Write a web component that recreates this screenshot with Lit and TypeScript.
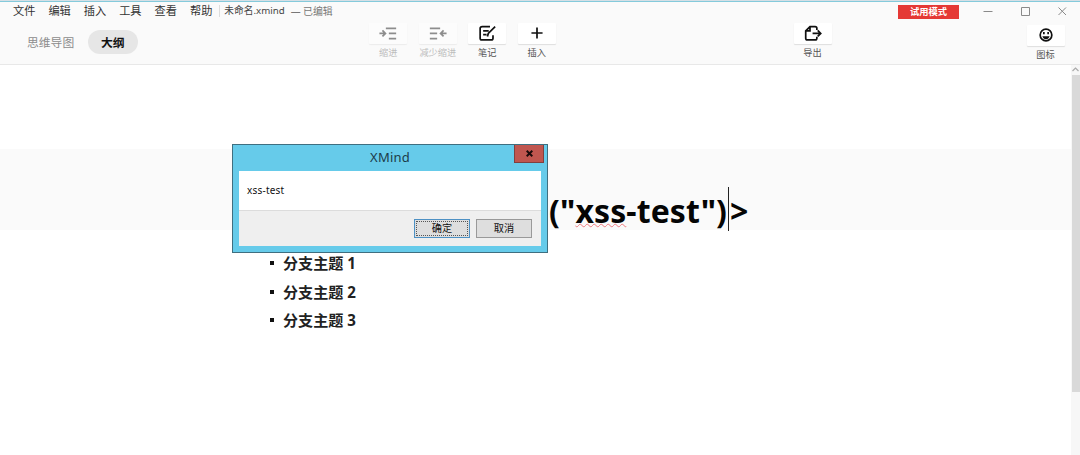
import { LitElement, html, css, svg, type TemplateResult } from "lit";
import { customElement, property } from "lit/decorators.js";

const icons: Record<string, TemplateResult> = {
  indent: svg`<path d="M0 11h7M3.500 7.500L7 11l-3.500 3.500M7.500 5h12M11 11h8.500M11 17h8.500" />`,
  outdent: svg`<path d="M.5 5h12M.5 11H9M.5 17H9M20 11h-7M16.500 7.500L13 11l3.500 3.500" />`,
  note: svg`<path d="M13.500 3H4.500Q2 3 2 5v11.500Q2 18.500 4 18.500h11q2 0 2-2V13M5.500 8h6.500M5.500 12.500h4M10.500 14.500l1-3.500L19.500 3" />`,
  plus: svg`<path d="M10 4v13M3.500 10.500h13" />`,
  exporting: svg`<path d="M14.500 7V5q0-2-2-2H6.500L1.500 8v8.500q0 2 2 2h9q2 0 2-2V15M6.500 3v5H1.500M9.500 11H19M15.500 7.500L19 11l-3.500 3.500" />`,
  smile: svg`<circle cx="10" cy="10.500" r="6.800" /><path d="M7.500 7v2.500M12.500 7v2.500" /><path class="fill" d="M5.800 12h8.400q-1 3.500-4.200 3.500T5.800 12z" />`,
};

@customElement("tool-button")
class ToolButton extends LitElement {
  @property() icon = "";
  @property() label = "";
  static styles = css`
    :host { display: flex; flex-direction: column; align-items: center; width: 50px; color: #111; }
    :host([off]) { color: #8d8d8d; }
    .box { width: 38px; height: 21px; display: flex; align-items: center; justify-content: center;
      background: #fff; border-radius: 1px; box-shadow: 0 1px 1px #dedede; }
    :host([off]) .box { background: #fcfcfc; box-shadow: 0 1px 1px #ececec; }
    svg { width: 18px; height: 18px; margin-top: -1px; fill: none; stroke: currentColor; stroke-width: 2; overflow: visible; }
    .fill { fill: currentColor; stroke: none; }
    .label { margin-top: 3px; font-size: 9.200px; line-height: 12px; white-space: nowrap; color: #555; }
    :host([off]) .label { color: #bdbdbd; }
  `;
  render() {
    return html`<div class="box"><svg viewBox="0 0 20 21">${icons[this.icon]}</svg></div>
      <div class="label">${this.label}</div>`;
  }
}

@customElement("alert-dialog")
class AlertDialog extends LitElement {
  static styles = css`
    :host { box-sizing: border-box; display: flex; flex-direction: column; width: 316px; height: 109px;
      background: #66cbea; border: 1px solid #3f6f80; padding: 0 6px 6px; color: #111; }
    .bar { display: grid; grid-template-columns: 1fr auto 1fr; height: 26px; }
    .title { grid-column: 2; font-size: 13px; line-height: 25px; color: #1c3c48; letter-spacing: 0.200px; }
    .close { justify-self: end; box-sizing: border-box; width: 30px; height: 18px; margin-right: -3px;
      background: #c0564f; border: 1px solid #81403f; border-top: 0; display: flex; align-items: center; justify-content: center; }
    .close svg { width: 7px; height: 7px; stroke: #1b0b0b; stroke-width: 2.200; }
    .body { height: 39px; background: #fff; font-size: 10px; letter-spacing: 0.200px; line-height: 39px; padding-left: 8px; }
    .foot { flex: 1; background: #efefef; border-top: 1px solid #dcdcdc; display: flex; justify-content: flex-end; gap: 6px; padding: 8px 9px 0 0; }
    .btn { box-sizing: border-box; width: 56px; height: 19px; padding: 1px; background: #dedede; border: 1px solid #999; font-size: 10.200px; line-height: 15px; text-align: center; }
    .btn span { display: block; height: 15px; }
    .main { border-color: #4e91c4; }
    .main span { box-sizing: border-box; border: 1px dotted #555; line-height: 13px; }
  `;
  render() {
    return html`<div class="bar"><span class="title">XMind</span>
        <div class="close"><svg viewBox="0 0 8 8"><path d="M.8 .8l6.400 6.400M7.200 .8L.8 7.200" /></svg></div></div>
      <div class="body">xss-test</div>
      <div class="foot"><div class="btn main"><span>确定</span></div><div class="btn"><span>取消</span></div></div>`;
  }
}

@customElement("app-root")
class AppRoot extends LitElement {
  static styles = css`
    :host { display: flex; flex-direction: column; position: relative; width: 1080px; height: 455px; overflow: hidden;
      background: #fff; font-family: "Noto Sans", "Noto Sans CJK SC", sans-serif; color: #222; }
    header { box-sizing: border-box; height: 65px; background: #fafafa; border-bottom: 1px solid #e8e8e8; flex: none; }
    .edge { height: 1px; background: #d5dfe5; border-bottom: 1px solid #84cadb; }
    .menu { display: flex; align-items: center; height: 18px; padding-left: 13px; font-size: 11.200px; line-height: 18px; color: #333; }
    .menu span { width: 35.400px; white-space: nowrap; }
    .menu .doc { width: auto; margin-left: -6px; border-left: 1px solid #ddd; height: 12px; line-height: 12px; padding-left: 4px; font-size: 9.700px; color: #444; }
    .menu .state { width: auto; margin-left: 6px; font-size: 9.900px; color: #777; }
    .badge { width: 61px; height: 14px; margin: 2px 24px 0 auto; background: #e53935; color: #fff; font-size: 9.300px; font-weight: 700; line-height: 14px; text-align: center; }
    .win { display: flex; gap: 27px; margin-right: 13px; }
    .win svg { width: 10px; height: 10px; fill: none; stroke: #8a8a8a; }
    .tools { display: flex; height: 43px; align-items: flex-start; }
    .tab { font-size: 11.800px; line-height: 24px; color: #8c8c8c; margin: 10px 0 0 27px; width: 60.500px; }
    .tab.on { width: 50.500px; margin-left: 0; border-radius: 12px; background: #e6e6e6; color: #111; font-weight: 700; text-align: center; }
    .group { display: flex; margin: 3px 0 0 225.500px; }
    .group tool-button { width: 49.500px; }
    .export { margin: 3px 0 0 226px; }
    .emoji { margin: 5px 0 0 183px; }
    main { flex: 1; display: flex; min-height: 0; }
    .page { flex: 1; padding-top: 84px; }
    .topic { box-sizing: border-box; height: 81px; background: #fafafa; padding: 38px 0 0 549px; display: flex; align-items: flex-start;
      font-size: 32px; font-weight: 700; line-height: 48px; color: #050505; white-space: pre; }
    .text { letter-spacing: 0.100px; }
    .typo { text-decoration: underline wavy #ee7a80 0.600px; text-decoration-skip-ink: none; text-underline-offset: 0; }
    .caret { width: 1px; height: 44px; background: #222; margin: 0 1px 0 1px; }
    .list { display: flex; flex-direction: column; padding: 19px 0 0 270px; }
    .item { display: flex; align-items: center; gap: 9px; height: 28.600px; font-size: 15.100px; font-weight: 700; line-height: 28px; color: #222; }
    .dot { width: 4px; height: 4px; background: #111; }
    .scroll { width: 9px; background: #f7f7f7; }
    .scroll svg { display: block; width: 8px; height: 10px; fill: none; stroke: #aaa; stroke-width: 1.200; }
    .thumb { width: 8px; height: 317px; margin-left: 1px; background: #d9d9d9; }
    alert-dialog { position: absolute; left: 232px; top: 144px; }
  `;
  render() {
    return html`
      <header>
        <div class="edge"></div>
        <div class="menu">
          ${["文件", "编辑", "插入", "工具", "查看", "帮助"].map((m) => html`<span>${m}</span>`)}
          <span class="doc">未命名.xmind</span><span class="state">— 已编辑</span>
          <div class="badge">试用模式</div>
          <div class="win">
            <svg viewBox="0 0 10 10"><path d="M.5 5.500h9" /></svg>
            <svg viewBox="0 0 10 10"><path d="M1.500 1.500h8v8h-8z" /></svg>
            <svg viewBox="0 0 10 10"><path d="M1.500 1.500l7.500 7.500M9 1.500L1.500 9" /></svg>
          </div>
        </div>
        <div class="tools">
          <div class="tab">思维导图</div><div class="tab on">大纲</div>
          <div class="group">
            <tool-button off icon="indent" label="缩进"></tool-button>
            <tool-button off icon="outdent" label="减少缩进"></tool-button>
            <tool-button icon="note" label="笔记"></tool-button>
            <tool-button icon="plus" label="插入"></tool-button>
          </div>
          <tool-button class="export" icon="exporting" label="导出"></tool-button>
          <tool-button class="emoji" icon="smile" label="图标"></tool-button>
        </div>
      </header>
      <main>
        <div class="page">
          <div class="topic"><span class="text">("<span class="typo">xss</span>-test")</span><div class="caret"></div><span>&gt;</span></div>
          <div class="list">${[1, 2, 3].map((n) => html`<div class="item"><i class="dot"></i>分支主题 ${n}</div>`)}</div>
        </div>
        <div class="scroll"><svg viewBox="0 0 8 10"><path d="M1.500 6L4.500 3l3 3" /></svg><div class="thumb"></div></div>
      </main>
      <alert-dialog></alert-dialog>`;
  }
}
